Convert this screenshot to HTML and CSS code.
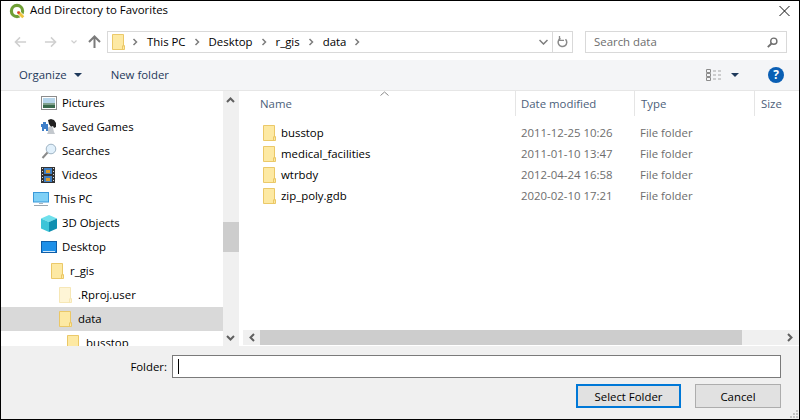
FILE: index.html
```html
<!DOCTYPE html>
<html lang="en">
<head>
  <meta charset="UTF-8" />
  <title>Add Directory to Favorites</title>
  <link rel="stylesheet" href="styles.css">
</head>
<body>
  <svg class="defs" width="0" height="0">
    <symbol id="folder" viewBox="0 0 13 17" preserveAspectRatio="none">
      <path d="M.5.5h11v12h1v4H.5z" fill="#fde9a3" stroke="#eac663"/>
      <path d="M10.500 16.500v-4h2" fill="none" stroke="#eac663"/>
    </symbol>
    <symbol id="folder-pale" viewBox="0 0 13 17" preserveAspectRatio="none">
      <path d="M.5.5h11v12h1v4H.5z" fill="#fef5d6" stroke="#f6e6b4"/>
      <path d="M10.500 16.500v-4h2" fill="none" stroke="#f6e6b4"/>
    </symbol>
    <symbol id="chev" viewBox="0 0 6 8">
      <path d="M1.500 1l3 3-3 3" fill="none" stroke="#7d7d7d" stroke-width="1.500"/>
    </symbol>
  </svg>

  <div class="window">
    <div class="titlebar">
      <svg class="logo" width="17" height="16" viewBox="0 0 17 16">
        <circle cx="8" cy="8" r="5.600" fill="#fff" stroke="#6f9f35" stroke-width="3.200"/>
        <path d="M8 8h3l5 5-3 3-5-5z" fill="#fff"/>
        <path d="M8.500 8.500h2.200l4.600 4.800-2 2-4.800-4.600z" fill="#eec43c"/>
        <circle cx="9.600" cy="9.600" r="1.400" fill="#d8402e"/>
      </svg>
      <span class="title">Add Directory to Favorites</span>
      <svg class="close" width="11" height="10" viewBox="0 0 11 10">
        <path d="M.5 0l10 10M10.500 0L.5 10" stroke="#111" fill="none"/>
      </svg>
    </div>

    <div class="navbar">
      <svg class="nav-btn back" width="13" height="12" viewBox="0 0 14 12">
        <path d="M13 6H2M6.500 1L1.500 6l5 5" fill="none" stroke="#cfcfcf" stroke-width="1.600"/>
      </svg>
      <svg class="nav-btn forward" width="13" height="12" viewBox="0 0 14 12">
        <path d="M1 6h11M7.500 1l5 5-5 5" fill="none" stroke="#cfcfcf" stroke-width="1.600"/>
      </svg>
      <svg class="nav-btn recent" width="6" height="4" viewBox="0 0 6 4">
        <path d="M.5.500l2.500 2.500L5.500.5" fill="none" stroke="#cfcfcf" stroke-width="1.200"/>
      </svg>
      <svg class="nav-btn up" width="13" height="13" viewBox="0 0 13 13">
        <path d="M6.500 13V2M1 7l5.500-5.500L12 7" fill="none" stroke="#7b7b7b" stroke-width="2"/>
      </svg>
      <div class="address">
        <svg class="addr-folder" width="13" height="16"><use href="#folder"/></svg>
        <svg class="crumb-chev" width="6" height="8"><use href="#chev"/></svg>
        <span class="crumb">This PC</span>
        <svg class="crumb-chev" width="6" height="8"><use href="#chev"/></svg>
        <span class="crumb">Desktop</span>
        <svg class="crumb-chev" width="6" height="8"><use href="#chev"/></svg>
        <span class="crumb">r_gis</span>
        <svg class="crumb-chev" width="6" height="8"><use href="#chev"/></svg>
        <span class="crumb">data</span>
        <svg class="crumb-chev" width="6" height="8"><use href="#chev"/></svg>
        <span class="spacer"></span>
        <svg class="addr-drop" width="9" height="6" viewBox="0 0 9 6">
          <path d="M.5 1l4 4 4-4" fill="none" stroke="#7d7d7d" stroke-width="1.500"/>
        </svg>
        <div class="addr-refresh">
          <svg width="11" height="12" viewBox="0 0 11 12">
            <path d="M8.500 3.200A4.300 4.300 0 1 1 3.500 2.400" fill="none" stroke="#8a8a8a" stroke-width="1.500"/>
            <path d="M2.500 0v4.400H7" fill="none" stroke="#8a8a8a" stroke-width="1.300"/>
          </svg>
        </div>
      </div>
      <div class="search">
        <span class="search-text">Search data</span>
        <svg width="11" height="11" viewBox="0 0 11 11">
          <circle cx="6.800" cy="4.200" r="3.100" fill="none" stroke="#6f6f6f" stroke-width="1.400"/>
          <path d="M4.500 6.500L.8 10.200" stroke="#6f6f6f" stroke-width="1.800"/>
        </svg>
      </div>
    </div>

    <div class="cmdbar">
      <span class="cmd organize">Organize</span>
      <span class="caret"></span>
      <span class="cmd newfolder">New folder</span>
      <span class="spacer"></span>
      <svg class="view-icon" width="16" height="12" viewBox="0 0 16 12">
        <path d="M.5.5h4v3h-4zM.5 4.500h4v3h-4zM.5 8.500h4v3h-4z" fill="none" stroke="#8c8c8c"/>
        <path d="M7 2h3M12 2h3M7 6h3M12 6h3M7 10h3M12 10h3" stroke="#a5a5a5"/>
      </svg>
      <span class="caret view-caret"></span>
      <span class="help">?</span>
    </div>

    <div class="panes">
      <div class="left">
        <div class="tree">
          <div class="node lv1">
            <svg width="16" height="14" viewBox="0 0 16 14">
              <rect x=".5" y=".5" width="15" height="13" fill="#fff" stroke="#8c8c8c"/>
              <rect x="2" y="2" width="12" height="5" fill="#b6d5ea"/>
              <rect x="2" y="7" width="12" height="2" fill="#7fa08c"/>
              <rect x="2" y="9" width="12" height="3" fill="#3a6a4c"/>
            </svg>
            <span>Pictures</span>
          </div>
          <div class="node lv1">
            <svg width="16" height="16" viewBox="0 0 16 16">
              <path d="M0 5h2V3h3v2h2v7H5v-2H3v2H1V8H0z" fill="#3f7fc8"/>
              <path d="M7 1l3-1 3 1 2 3 0 4-2 1-1-2-2 1-2-3z" fill="#222"/>
              <path d="M7 9c1-2 4-2 5 0l1 4 1 2H6l1-2z" fill="#c3c8cd"/>
            </svg>
            <span>Saved Games</span>
          </div>
          <div class="node lv1">
            <svg width="16" height="16" viewBox="0 0 16 16">
              <circle cx="10" cy="6" r="4.800" fill="#e1f0fb" stroke="#9fb4c4"/>
              <path d="M6.500 9.500L1.500 15" stroke="#8a8a8a" stroke-width="2"/>
            </svg>
            <span>Searches</span>
          </div>
          <div class="node lv1">
            <svg width="14" height="16" viewBox="0 0 14 16">
              <rect width="14" height="16" fill="#333"/>
              <path d="M1 1h1v1H1zM1 4h1v1H1zM1 7h1v1H1zM1 10h1v1H1zM1 13h1v1H1zM12 1h1v1h-1zM12 4h1v1h-1zM12 7h1v1h-1zM12 10h1v1h-1zM12 13h1v1h-1z" fill="#ddd"/>
              <rect x="3" y="1" width="8" height="6" fill="#3f7fc4"/>
              <rect x="5" y="3" width="4" height="3" fill="#d89a2c"/>
              <rect x="3" y="9" width="8" height="6" fill="#3f7fc4"/>
              <rect x="5" y="11" width="4" height="3" fill="#d89a2c"/>
            </svg>
            <span class="after-film">Videos</span>
          </div>
          <div class="node lv0">
            <svg width="16" height="14" viewBox="0 0 16 14">
              <rect x=".5" y=".5" width="15" height="9.500" fill="#7fd0f6" stroke="#3b99d9"/>
              <path d="M6 11h4v1H6z" fill="#a9b4bd"/>
              <path d="M1 13h14v1H1z" fill="#9aa6b0"/>
            </svg>
            <span>This PC</span>
          </div>
          <div class="node lv1">
            <svg width="16" height="17" viewBox="0 0 16 17">
              <path d="M8 0l8 3.500L8 7 0 3.500z" fill="#6fe0ec"/>
              <path d="M0 3.500L8 7v10l-8-3.500z" fill="#3cc4d8"/>
              <path d="M16 3.500L8 7v10l8-3.500z" fill="#0f8fb0"/>
            </svg>
            <span>3D Objects</span>
          </div>
          <div class="node lv1">
            <svg width="16" height="12" viewBox="0 0 16 12">
              <rect x=".5" y=".5" width="15" height="11" fill="#1e90e8" stroke="#0f5ea8"/>
              <path d="M2 10h12v1H2z" fill="#cfe8fb"/>
            </svg>
            <span>Desktop</span>
          </div>
          <div class="node lv2">
            <svg class="tree-folder" width="13" height="16"><use href="#folder"/></svg>
            <span>r_gis</span>
          </div>
          <div class="node lv3">
            <svg class="tree-folder" width="13" height="16"><use href="#folder-pale"/></svg>
            <span>.Rproj.user</span>
          </div>
          <div class="node lv3 selected">
            <svg class="tree-folder" width="13" height="16"><use href="#folder"/></svg>
            <span>data</span>
          </div>
          <div class="node lv4">
            <svg class="tree-folder" width="13" height="16"><use href="#folder"/></svg>
            <span>busstop</span>
          </div>
        </div>
        <div class="vscroll">
          <svg class="scroll-btn" width="15" height="17" viewBox="0 0 15 17">
            <path d="M4 11l3.500-3.500L11 11" fill="none" stroke="#606060" stroke-width="2"/>
          </svg>
          <div class="vthumb"></div>
          <svg class="scroll-btn down" width="15" height="16" viewBox="0 0 15 16">
            <path d="M4 6l3.500 3.500L11 6" fill="none" stroke="#606060" stroke-width="2"/>
          </svg>
        </div>
      </div>
      <div class="splitter"></div>
      <div class="right">
        <svg class="sort-arrow" width="9" height="5" viewBox="0 0 9 5">
          <path d="M.5 4.500l4-3.500 4 3.500" fill="none" stroke="#8a8a8a"/>
        </svg>
        <div class="list">
          <div class="cols list-head">
            <div class="head-cell name-head">Name</div>
            <div class="head-cell">Date modified</div>
            <div class="head-cell type-head">Type</div>
            <div class="head-cell last">Size</div>
          </div>
          <div class="cols file">
            <div class="file-name"><svg width="13" height="16"><use href="#folder"/></svg>busstop</div>
            <div class="meta">2011-12-25 10:26</div>
            <div class="meta">File folder</div>
          </div>
          <div class="cols file">
            <div class="file-name"><svg width="13" height="16"><use href="#folder"/></svg>medical_facilities</div>
            <div class="meta">2011-01-10 13:47</div>
            <div class="meta">File folder</div>
          </div>
          <div class="cols file">
            <div class="file-name"><svg width="13" height="16"><use href="#folder"/></svg>wtrbdy</div>
            <div class="meta">2012-04-24 16:58</div>
            <div class="meta">File folder</div>
          </div>
          <div class="cols file">
            <div class="file-name"><svg width="13" height="16"><use href="#folder"/></svg>zip_poly.gdb</div>
            <div class="meta">2020-02-10 17:21</div>
            <div class="meta">File folder</div>
          </div>
        </div>
        <div class="hscroll">
          <svg class="hbtn" width="17" height="15" viewBox="0 0 17 15">
            <path d="M11 4L7.500 7.500 11 11" fill="none" stroke="#606060" stroke-width="2"/>
          </svg>
          <div class="hthumb"></div>
          <svg class="hbtn right-btn" width="17" height="15" viewBox="0 0 17 15">
            <path d="M6 4l3.500 3.500L6 11" fill="none" stroke="#606060" stroke-width="2"/>
          </svg>
        </div>
      </div>
    </div>

    <div class="bottom">
      <div class="folder-row">
        <label class="folder-label">Folder:</label>
        <div class="folder-input"><span class="cursor"></span></div>
      </div>
      <div class="buttons">
        <button class="btn primary">Select Folder</button>
        <button class="btn cancel">Cancel</button>
      </div>
      <svg class="grip" width="9" height="9" viewBox="0 0 9 9">
        <path d="M7 1h2v2H7zM4 4h2v2H4zM7 4h2v2H7zM1 7h2v2H1zM4 7h2v2H4zM7 7h2v2H7z" fill="#c4c4c4"/>
      </svg>
    </div>
  </div>
</body>
</html>
```

FILE: styles.css
```css
* {
  box-sizing: border-box;
}
html, body {
  margin: 0;
  padding: 0;
}
body {
  font-family: "Open Sans", "Noto Sans", sans-serif;
  font-size: 11.4px;
  color: #000;
  background: #fff;
}
svg {
  display: block;
  flex: none;
}
.defs {
  position: absolute;
}
.spacer {
  flex: 1;
}
.window {
  width: 800px;
  height: 420px;
  border: 1px solid #000;
  display: flex;
  flex-direction: column;
  overflow: hidden;
  background: #fff;
}

/* title */
.titlebar {
  height: 20px;
  display: flex;
  align-items: center;
  padding-left: 8px;
}
.title {
  margin-left: 4px;
  margin-bottom: 3px;
  flex: 1;
}
.logo {
  margin-bottom: 1px;
}
.close {
  margin-right: 9px;
}

/* back / forward / address / search */
.navbar {
  height: 39px;
  display: flex;
  align-items: flex-start;
  padding-top: 10px;
}
.nav-btn {
  margin-top: 5px;
}
.back {
  margin-left: 13px;
}
.forward {
  margin-left: 17px;
}
.recent {
  margin-left: 14px;
  margin-top: 9px;
}
.up {
  margin-left: 11px;
  margin-top: 4px;
}
.address {
  width: 466px;
  height: 22px;
  margin-left: 6px;
  border: 1px solid #d9d9d9;
  display: flex;
  align-items: center;
  padding-left: 4px;
}
.addr-folder {
  margin-right: 7px;
}
.crumb {
  margin: 0 8px 2px 9px;
}
.addr-drop {
  margin-right: 4px;
}
.addr-refresh {
  width: 20px;
  height: 20px;
  border-left: 1px solid #d9d9d9;
  display: flex;
  align-items: center;
  justify-content: center;
}
.search {
  width: 202px;
  height: 22px;
  margin-left: 12px;
  border: 1px solid #d9d9d9;
  display: flex;
  align-items: center;
  justify-content: space-between;
  padding: 0 8px;
}
.search-text {
  color: #6d6d6d;
  margin-bottom: 2px;
}

/* organize bar */
.cmdbar {
  height: 31px;
  background: #f4f5f7;
  border-bottom: 1px solid #e6e6e6;
  display: flex;
  align-items: center;
  padding-left: 18px;
}
.cmd {
  color: #1e395b;
  margin-bottom: 2px;
}
.caret {
  width: 0;
  height: 0;
  margin-left: 7px;
  border-left: 4px solid transparent;
  border-right: 4px solid transparent;
  border-top: 4px solid #1e395b;
}
.newfolder {
  margin-left: 29px;
}
.view-caret {
  margin-left: 9px;
}
.help {
  width: 16px;
  height: 16px;
  margin: 0 15px 0 29px;
  border-radius: 50%;
  background: #0a5fb4;
  color: #fff;
  font-weight: 700;
  font-size: 12px;
  line-height: 16px;
  text-align: center;
}

/* panes */
.panes {
  height: 255px;
  display: flex;
}
.left {
  width: 238px;
  display: flex;
}
.tree {
  width: 222px;
  overflow: hidden;
}
.node {
  height: 24px;
  display: flex;
  align-items: center;
  gap: 5px;
  white-space: nowrap;
}
.node span {
  margin-bottom: 2px;
}
.node.selected {
  background: #d9d9d9;
}
.lv0 {
  padding-left: 32px;
}
.lv1 {
  padding-left: 40px;
}
.lv2 {
  padding-left: 50px;
}
.lv3 {
  padding-left: 58px;
}
.lv4 {
  padding-left: 66px;
}
.tree-folder {
  margin-right: 1px;
}
.after-film {
  margin-left: 2px;
}
.vscroll {
  width: 16px;
  background: #f0f0f0;
  display: flex;
  flex-direction: column;
}
.scroll-btn.down {
  margin-top: auto;
}
.vthumb {
  height: 30px;
  margin-top: 114px;
  background: #cdcdcd;
}
.splitter {
  width: 4px;
  background: #fff;
}
.right {
  flex: 1;
  display: flex;
  flex-direction: column;
  position: relative;
  min-width: 0;
}
.sort-arrow {
  position: absolute;
  left: 137px;
  top: 0;
}
.list {
  flex: 1;
}
.cols {
  display: grid;
  grid-template-columns: 273px 119px 120px 1fr;
}
.list-head {
  height: 25px;
  margin-bottom: 7px;
  color: #4c607a;
}
.head-cell {
  display: flex;
  align-items: center;
  padding-left: 5px;
  padding-bottom: 1px;
  border-right: 1px solid #e5e5e5;
}
.name-head {
  padding-left: 17px;
}
.type-head {
  padding-left: 6px;
}
.head-cell.last {
  border-right: 0;
  padding-left: 6px;
}
.file {
  height: 21px;
  align-items: center;
}
.file-name {
  display: flex;
  align-items: center;
  gap: 5px;
  padding-left: 20px;
  padding-bottom: 2px;
}
.meta {
  color: #6d6d6d;
  padding-left: 5px;
  padding-bottom: 2px;
}
.hscroll {
  height: 15px;
  margin-bottom: 1px;
  background: #f0f0f0;
  display: flex;
}
.hthumb {
  width: 482px;
  background: #cdcdcd;
}
.right-btn {
  margin-left: auto;
}

/* folder field and buttons */
.bottom {
  height: 73px;
  background: #f0f0f0;
  position: relative;
  padding-top: 9px;
}
.folder-row {
  display: flex;
  align-items: center;
  height: 23px;
}
.folder-label {
  width: 166px;
  text-align: right;
}
.folder-input {
  width: 609px;
  height: 23px;
  margin-left: 5px;
  background: #fff;
  border: 1px solid #7a7a7a;
  display: flex;
  align-items: center;
  padding-left: 5px;
}
.cursor {
  width: 1px;
  height: 15px;
  background: #000;
}
.buttons {
  display: flex;
  justify-content: flex-end;
  gap: 14px;
  margin-top: 6px;
  padding-right: 18px;
}
.btn {
  height: 24px;
  font: inherit;
  color: #000;
  background: #e1e1e1;
  border: 1px solid #adadad;
  padding: 0;
}
.primary {
  width: 105px;
  border: 2px solid #0078d7;
}
.cancel {
  width: 86px;
}
.grip {
  position: absolute;
  right: 1px;
  bottom: 1px;
}
```
